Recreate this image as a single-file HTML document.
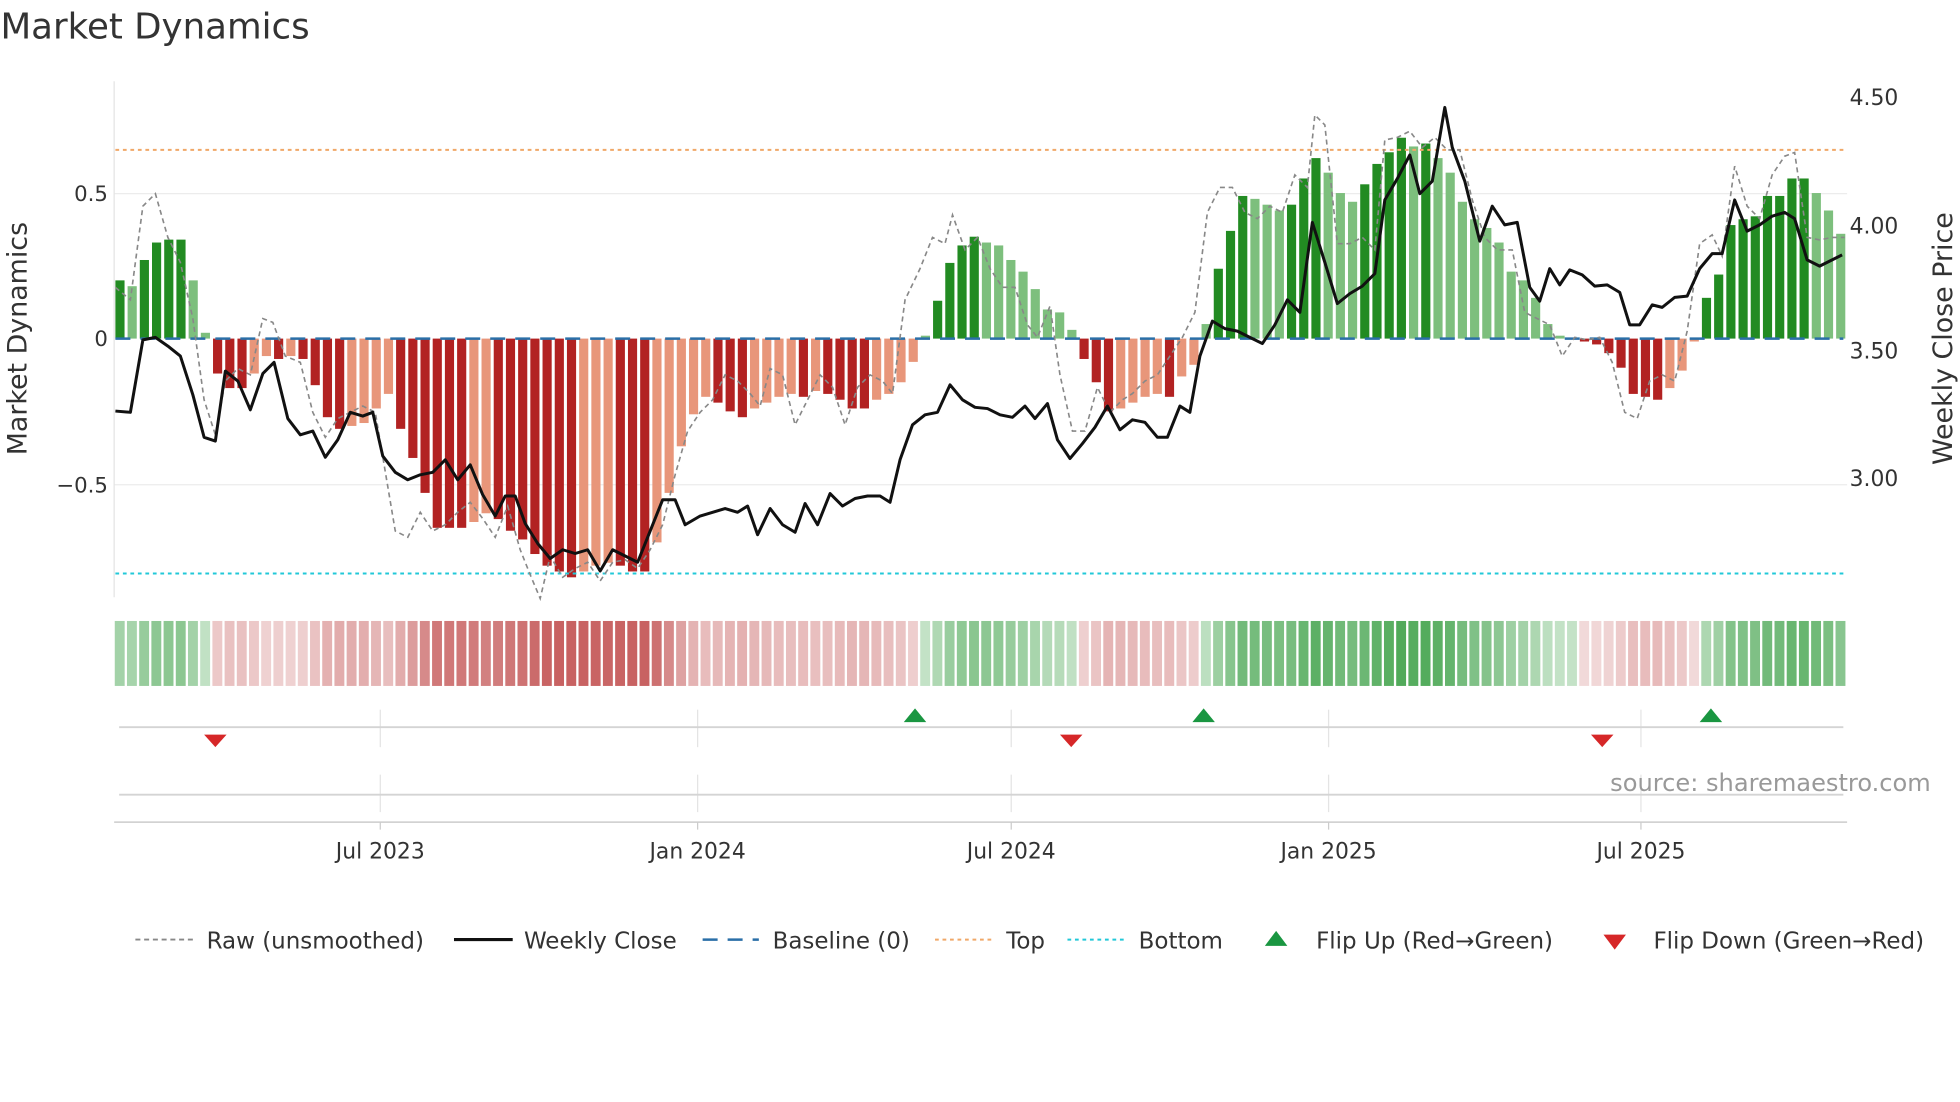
<!DOCTYPE html>
<html><head><meta charset="utf-8"><style>
html,body{margin:0;padding:0;background:#fff;width:1960px;height:1102px;overflow:hidden}
svg{display:block}
text{font-family:"DejaVu Sans","Liberation Sans",sans-serif;fill:#333}
</style></head><body>
<svg id="s" width="1960" height="1102" viewBox="0 0 1568 882" xmlns="http://www.w3.org/2000/svg">
<text x="0" y="31" font-size="28.5">Market Dynamics</text>
<g stroke="#ececec" stroke-width="1">
<line x1="91" y1="155" x2="1478" y2="155"/><line x1="91" y1="388" x2="1478" y2="388"/>
</g>
<line x1="91" y1="65" x2="91" y2="478" stroke="#e4e4e4"/>
<g id="bars"></g>
<line x1="92" y1="120" x2="1475" y2="120" stroke="#f0a868" stroke-width="1.6" stroke-dasharray="3,3"/>
<line x1="92" y1="459" x2="1475" y2="459" stroke="#22c8d8" stroke-width="1.6" stroke-dasharray="3,3"/>
<line x1="92" y1="271" x2="1475" y2="271" stroke="#2a6fa8" stroke-width="2" stroke-dasharray="12,8"/>
<polyline id="raw" fill="none" stroke="#888" stroke-width="1.3" stroke-dasharray="4,3"/>
<polyline id="close" fill="none" stroke="#111" stroke-width="2.4" stroke-linejoin="round"/>
<g font-size="17" text-anchor="end">
<text x="86" y="161">0.5</text><text x="86" y="277">0</text><text x="86" y="394">−0.5</text>
</g>
<g font-size="17.5">
<text x="1480" y="84">4.50</text><text x="1480" y="187">4.00</text><text x="1480" y="287">3.50</text><text x="1480" y="389">3.00</text>
</g>
<text transform="translate(21,271) rotate(-90)" text-anchor="middle" font-size="21.5">Market Dynamics</text>
<text transform="translate(1562,271) rotate(-90)" text-anchor="middle" font-size="21.5">Weekly Close Price</text>
<g id="band"></g>
<g stroke="#e4e4e4" stroke-width="1">
<line x1="304" y1="568" x2="304" y2="598"/><line x1="558" y1="568" x2="558" y2="598"/><line x1="809" y1="568" x2="809" y2="598"/><line x1="1063" y1="568" x2="1063" y2="598"/><line x1="1313" y1="568" x2="1313" y2="598"/>
<line x1="304" y1="620" x2="304" y2="650"/><line x1="558" y1="620" x2="558" y2="650"/><line x1="809" y1="620" x2="809" y2="650"/><line x1="1063" y1="620" x2="1063" y2="650"/><line x1="1313" y1="620" x2="1313" y2="650"/>
</g>
<line x1="95" y1="582" x2="1475" y2="582" stroke="#d4d4d4" stroke-width="1.5"/>
<line x1="95" y1="636" x2="1475" y2="636" stroke="#d4d4d4" stroke-width="1.5"/>
<line x1="91" y1="658" x2="1478" y2="658" stroke="#ccc" stroke-width="1.2"/>
<g stroke="#ccc"><line x1="304" y1="658" x2="304" y2="664"/><line x1="558" y1="658" x2="558" y2="664"/><line x1="809" y1="658" x2="809" y2="664"/><line x1="1063" y1="658" x2="1063" y2="664"/><line x1="1313" y1="658" x2="1313" y2="664"/></g>
<g fill="#1a9641"><path d="M723,578 L741,578 L732,567Z"/><path d="M954,578 L972,578 L963,567Z"/><path d="M1360,578 L1378,578 L1369,567Z"/></g>
<g fill="#d62728"><path d="M163,588 L181,588 L172,598Z"/><path d="M848,588 L866,588 L857,598Z"/><path d="M1273,588 L1291,588 L1282,598Z"/></g>
<text x="1545" y="633" text-anchor="end" font-size="19.3" style="fill:#999">source: sharemaestro.com</text>
<g font-size="17.5" text-anchor="middle">
<text x="304" y="687">Jul 2023</text><text x="558" y="687">Jan 2024</text><text x="809" y="687">Jul 2024</text><text x="1063" y="687">Jan 2025</text><text x="1313" y="687">Jul 2025</text>
</g>
<g font-size="18.4">
<line x1="108" y1="752" x2="154" y2="752" stroke="#888" stroke-width="1.5" stroke-dasharray="4,3"/>
<text x="165" y="759">Raw (unsmoothed)</text>
<line x1="363" y1="752" x2="410" y2="752" stroke="#111" stroke-width="2.5"/>
<text x="419" y="759">Weekly Close</text>
<line x1="562" y1="752" x2="607" y2="752" stroke="#2a6fa8" stroke-width="2" stroke-dasharray="12,8"/>
<text x="618" y="759">Baseline (0)</text>
<line x1="748" y1="752" x2="793" y2="752" stroke="#f0a868" stroke-width="1.6" stroke-dasharray="3,3"/>
<text x="805" y="759">Top</text>
<line x1="854" y1="752" x2="899" y2="752" stroke="#22c8d8" stroke-width="1.6" stroke-dasharray="3,3"/>
<text x="911" y="759">Bottom</text>
<path d="M1012,757 L1030,757 L1021,745Z" fill="#1a9641"/>
<text x="1053" y="759">Flip Up (Red→Green)</text>
<path d="M1283,748 L1301,748 L1292,760Z" fill="#d62728"/>
<text x="1323" y="759">Flip Down (Green→Red)</text>
</g>
</svg>
<script>
var v=[0.2,0.18,0.27,0.33,0.34,0.34,0.2,0.02,
-0.12,-0.17,-0.17,-0.12,-0.06,-0.07,-0.06,-0.07,-0.16,-0.27,-0.31,-0.3,-0.29,-0.24,-0.19,-0.31,-0.41,-0.53,-0.65,-0.65,-0.65,-0.63,-0.6,-0.62,-0.66,-0.69,-0.74,-0.78,-0.8,-0.82,-0.8,-0.78,-0.77,-0.78,-0.8,-0.8,-0.7,-0.53,-0.37,-0.26,-0.2,-0.22,-0.25,-0.27,-0.24,-0.22,-0.2,-0.19,-0.2,-0.18,-0.19,-0.21,-0.24,-0.24,-0.21,-0.19,-0.15,-0.08,
0.01,0.13,0.26,0.32,0.35,0.33,0.32,0.27,0.23,0.17,0.1,0.09,0.03,
-0.07,-0.15,-0.25,-0.24,-0.22,-0.2,-0.19,-0.2,-0.13,-0.09,
0.05,0.24,0.37,0.49,0.48,0.46,0.44,0.46,0.55,0.62,0.57,0.5,0.47,0.53,0.6,0.64,0.69,0.66,0.67,0.62,0.57,0.47,0.41,0.38,0.33,0.23,0.2,0.14,0.05,0.01,
0,-0.01,-0.02,-0.05,-0.1,-0.19,-0.2,-0.21,-0.17,-0.11,-0.01,
0.14,0.22,0.39,0.41,0.42,0.49,0.49,0.55,0.55,0.5,0.44,0.36];
var NS="http://www.w3.org/2000/svg",b=document.getElementById('bars'),bd=document.getElementById('band');
var step=(1479-92)/v.length,w=step*0.75;
function r(g,x,y,wd,h,f){var e=document.createElementNS(NS,'rect');e.setAttribute('x',x);e.setAttribute('y',y);e.setAttribute('width',wd);e.setAttribute('height',h);e.setAttribute('fill',f);g.appendChild(e);}
for(var i=0;i<v.length;i++){
 var x=92+step*i,val=v[i],p=i?v[i-1]:0,y0=271,h=Math.abs(val)*233;
 var intens=Math.abs(val)>Math.abs(p)-0.001;
 var c=val>=0?(intens?'#228b22':'#7dbf7d'):(intens?'#b22222':'#e8967a');
 r(b,x,val>=0?y0-h:y0,w,Math.max(h,0.5),c);
 var bc=val>=0?'rgba(60,160,70,'+(0.3+0.6*Math.min(1,Math.abs(val)/0.7))+')':'rgba(190,70,70,'+(0.2+0.65*Math.min(1,Math.abs(val)/0.8))+')';
 r(bd,x-0.5,497,w+0.6,52,bc);
}
var cl="92,329 104,330 114,272 124,270 134,277 144,285 154,316 163,350 172,353 180,297 190,305 200,328 210,299 219,290 230,335 240,348 250,345 260,366 270,352 280,330 290,333 298,330 306,365 316,378 326,384 336,380 346,378 356,368 366,384 376,372 386,396 396,413 404,397 412,397 420,419 430,435 440,447 450,440 460,443 470,440 480,457 490,440 500,445 510,450 520,425 530,400 540,400 548,420 560,413 570,410 580,407 590,410 598,405 606,428 616,407 626,420 636,426 644,403 654,420 664,395 674,405 684,399 694,397 704,397 712,402 720,368 730,340 740,332 750,330 760,308 770,320 780,326 790,327 800,332 810,334 820,325 828,335 838,323 846,352 856,367 866,355 876,342 886,325 896,344 906,336 916,338 926,350 934,350 944,325 952,330 960,285 970,257 980,263 990,265 1000,270 1010,275 1020,260 1030,240 1040,250 1050,178 1060,210 1070,243 1080,235 1090,229 1100,219 1108,160 1118,143 1128,124 1136,155 1146,145 1156,86 1162,118 1172,145 1184,193 1194,165 1204,180 1214,178 1224,230 1232,241 1240,215 1248,228 1256,216 1266,220 1276,229 1286,228 1296,234 1304,260 1312,260 1322,244 1330,246 1340,238 1350,237 1360,215 1370,203 1378,203 1388,160 1398,185 1408,180 1418,173 1428,170 1436,175 1446,208 1456,213 1466,208 1474,204";
document.getElementById('close').setAttribute('points',cl);
var rw="92,230 104,240 114,165 124,155 134,190 144,210 154,255 163,320 172,348 180,305 190,295 200,300 210,255 218,258 228,285 240,290 250,330 260,350 270,335 280,330 290,325 300,330 316,425 326,430 336,410 346,425 356,420 366,410 376,402 386,415 396,430 406,405 416,440 424,460 432,479 440,445 450,462 460,455 470,450 480,465 490,450 500,448 510,455 520,440 530,420 540,380 550,345 560,330 570,320 580,300 590,305 600,315 608,325 616,295 626,300 636,340 646,320 656,300 666,310 676,340 686,310 696,300 706,305 714,315 724,240 736,215 746,190 756,195 762,172 772,200 782,190 792,215 802,230 812,230 822,260 830,270 840,245 848,300 858,345 868,345 878,310 888,330 898,320 906,315 916,305 926,300 936,285 946,270 956,250 966,170 976,150 986,150 996,170 1006,175 1016,165 1026,170 1036,140 1046,150 1052,92 1060,100 1070,195 1080,195 1090,190 1100,200 1108,112 1118,110 1128,105 1138,118 1148,110 1158,120 1168,120 1178,160 1188,190 1198,200 1210,200 1220,250 1230,255 1240,260 1250,285 1260,270 1270,272 1280,270 1290,290 1300,330 1310,335 1320,305 1330,300 1340,305 1350,265 1360,195 1370,188 1378,205 1388,133 1398,165 1408,175 1418,140 1428,125 1436,122 1446,190 1456,192 1466,190 1476,190";
document.getElementById('raw').setAttribute('points',rw);
</script>
</body></html>
